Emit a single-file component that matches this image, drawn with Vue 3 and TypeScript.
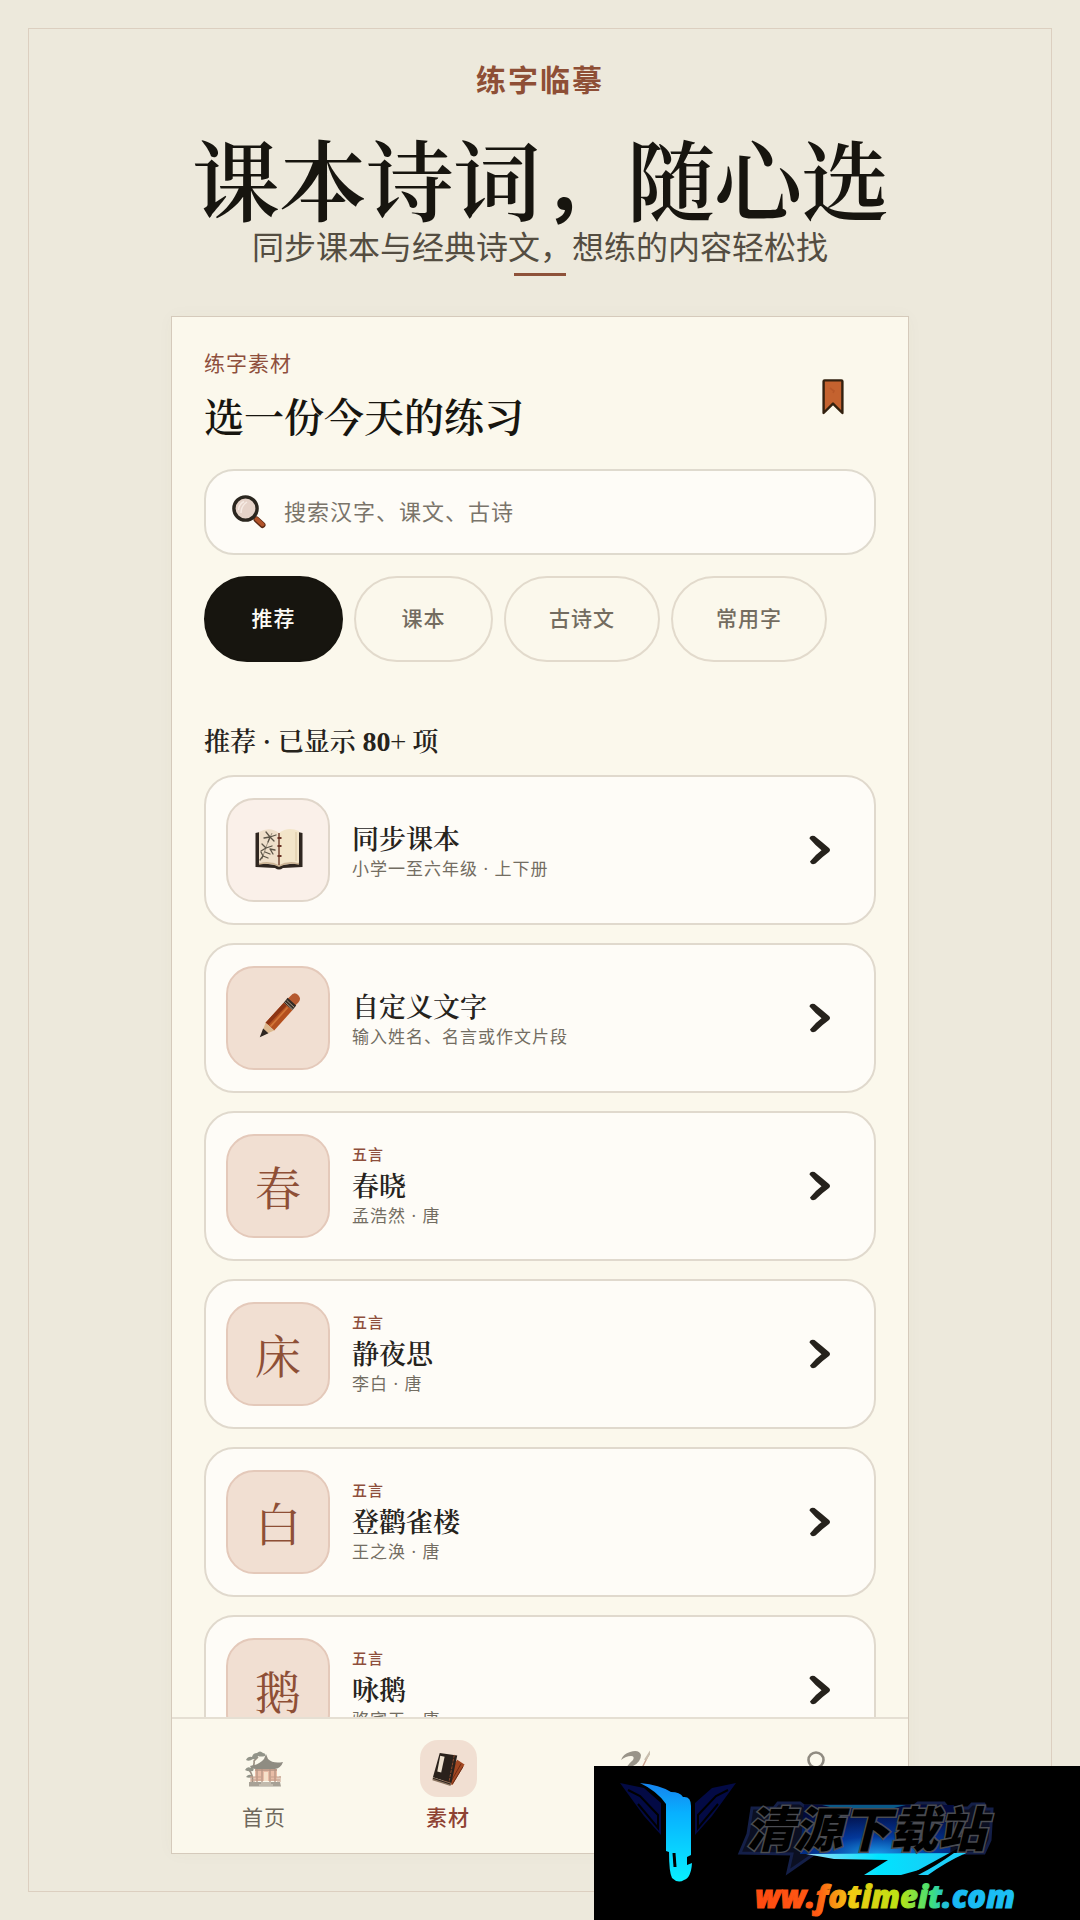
<script setup lang="ts">
import { ref } from 'vue'

interface Item {
  title: string
  sub: string
  tag?: string
  glyph?: string
  icon?: 'book' | 'pencil'
}

const query = ref('')
const chips: string[] = ['推荐', '课本', '古诗文', '常用字']
const activeChip = ref('推荐')

const items: Item[] = [
  { title: '同步课本', sub: '小学一至六年级 · 上下册', icon: 'book' },
  { title: '自定义文字', sub: '输入姓名、名言或作文片段', icon: 'pencil' },
  { tag: '五言', title: '春晓', sub: '孟浩然 · 唐', glyph: '春' },
  { tag: '五言', title: '静夜思', sub: '李白 · 唐', glyph: '床' },
  { tag: '五言', title: '登鹳雀楼', sub: '王之涣 · 唐', glyph: '白' },
  { tag: '五言', title: '咏鹅', sub: '骆宾王 · 唐', glyph: '鹅' },
]
</script>

<template>
  <div class="page">
    <main class="frame">
      <p class="brand">练字临摹</p>
      <h1 class="headline">课本诗词<span class="comma">，</span>随心选</h1>
      <p class="tagline">同步课本与经典诗文，想练的内容轻松找</p>
      <div class="rule"></div>

      <section class="phone">
        <div class="content">
          <header class="top">
            <div class="top-text">
              <p class="eyebrow">练字素材</p>
              <h2 class="heading">选一份今天的练习</h2>
            </div>
            <button class="bookmark" type="button">
              <svg width="22" height="36" viewBox="0 0 22 36">
                <path d="M1.6 2.2 Q1.6 1.4 2.6 1.4 L19.4 1.4 Q20.4 1.4 20.4 2.2 L20.4 34 L11 24.6 L1.6 34 Z" fill="#c4622f" stroke="#33210f" stroke-width="2.4" stroke-linejoin="round" />
                <path d="M8 9 L12 12 L11 14" fill="none" stroke="#b85829" stroke-width="1.6" />
              </svg>
            </button>
          </header>

          <label class="search">
            <svg width="34" height="34" viewBox="0 0 34 34">
              <path d="M24.5 24.5 L30.5 30" stroke="#5b2a15" stroke-width="6" stroke-linecap="round" />
              <path d="M24.5 24 L30.5 29.5" stroke="#b2532a" stroke-width="4" stroke-linecap="round" />
              <circle cx="13.5" cy="13.5" r="11.6" fill="#e6d3c9" stroke="#2b261f" stroke-width="3.4" />
              <path d="M6.5 15 Q7 9 12 6.5 M9 18 Q9 11 15 7" fill="none" stroke="#f6ebe4" stroke-width="1.5" />
            </svg>
            <input v-model="query" type="text" placeholder="搜索汉字、课文、古诗" />
          </label>

          <div class="chips">
            <button
              v-for="chip in chips"
              :key="chip"
              type="button"
              class="chip"
              :class="{ active: chip === activeChip }"
              @click="activeChip = chip"
            >{{ chip }}</button>
          </div>

          <h3 class="section">推荐 · 已显示 <b>80</b>+ 项</h3>

          <ul class="list">
            <li v-for="item in items" :key="item.title">
              <button type="button" class="card">
                <span class="thumb" :class="{ pale: item.icon === 'book' }">
                  <svg v-if="item.icon === 'book'" width="50" height="44" viewBox="-1 0 50 44">
                    <path d="M1.5 6 L6 5 L6 36 L22 38 L28 38 L44 36 L44 5 L48.5 6 L48.5 40 L29 41 Q25 44 21 41 L1.5 40 Z" fill="#2f2620" />
                    <path d="M5 5 Q16 -1 25 6 L25 38 Q16 33 5 36 Z" fill="#efdfca" />
                    <path d="M45 4 Q34 -1 25 6 L25 38 Q34 33 45 36 Z" fill="#f3e5c9" />
                    <path d="M5 37 Q16 34 25 39 Q34 34 45 37" fill="none" stroke="#cdb595" stroke-width="1.6" />
                    <path d="M42 5 L42 34" stroke="#dac6a3" stroke-width="1" />
                    <path d="M25 6 L25 38" stroke="#6d3a28" stroke-width="1.4" />
                    <path d="M23.5 11 L27.5 11 M23.5 19 L27.5 19 M23.5 29 L27.5 29" stroke="#6a3326" stroke-width="1.8" />
                    <path d="M18 6 Q13 16 8 32" fill="none" stroke="#877b69" stroke-width="0.8" />
                    <path d="M16 10 L10 11 M16 10 L12 5 M16 10 L22 8 M16 10 L20 14 M16 10 L14 15 M12 21 L8 17 M12 21 L18 19 M16 22 L21 23 M16 22 L19 27 M12 21 L7 24 M11 25 L16 27 M9 29 L14 31 M9 29 L6 33 M9 29 L7 25" stroke="#5c5447" stroke-width="1.3" stroke-linecap="round" />
                  </svg>
                  <svg v-else-if="item.icon === 'pencil'" width="46" height="50" viewBox="-3 1 48 52">
                    <path d="M34 5 Q38 0 42 4 Q46 8 42 12 L39 15 L31 8 Z" fill="#b5592f" />
                    <path d="M31 7 L40 15 L36 20 L27 12 Z" fill="#332b25" />
                    <path d="M30 9.5 L38 17 M28.5 11.5 L36.5 19" stroke="#b4a48e" stroke-width="1" />
                    <path d="M27 12 L36 20 L17 41 L8 33 Z" fill="#b4501f" />
                    <path d="M27 12 L30 15 L11 35 L8 33 Z" fill="#8c3514" />
                    <path d="M31 17 L13 37" stroke="#d27638" stroke-width="1.8" />
                    <path d="M8 33 L17 41 L3 47 Z" fill="#dcb990" />
                    <path d="M5.5 39 L11 44 L2 48 Z" fill="#2e2722" />
                  </svg>
                  <template v-else>{{ item.glyph }}</template>
                </span>
                <span class="texts">
                  <span v-if="item.tag" class="tag">{{ item.tag }}</span>
                  <span class="title">{{ item.title }}</span>
                  <span class="sub">{{ item.sub }}</span>
                </span>
                <svg class="chevron" width="22" height="30" viewBox="0 0 22 30">
                  <path d="M0.5 3.5 Q1 0 5.500 1 Q13 7 20 13 Q22 15 20 17 Q13 22 6.500 28.500 Q2 30.500 1 26.500 Q6 20 12.500 15.200 Q6 10 0.500 3.500 Z" fill="#26221c" />
                </svg>
              </button>
            </li>
          </ul>
        </div>

        <nav class="tabs">
          <a href="#home" class="tab">
            <span class="tab-icon">
              <svg class="faded" width="40" height="38" viewBox="0 0 40 38">
                <path d="M8 34 Q10 26 5 20 Q11 17 10 11 Q12 9 14 7" fill="none" stroke="#4c3a2c" stroke-width="1.6" />
                <path d="M2 10 Q4 6 8 7 Q9 3 13 3 Q16 0 19 3 Q22 3 21 6 Q17 7 14 6 Q13 10 9 9 Q5 12 2 10 Z M1 20 Q3 16 7 18 Q11 18 9 21 Q4 22 1 20 Z M2 27 Q5 23 9 26 Q6 29 2 27 Z" fill="#3d4439" />
                <path d="M22 4 L24 9 Q29 14 39 12 Q37 18 31 19 L12 19 Q7 19 6 16 Q15 15 20 9 Z" fill="#38342d" />
                <path d="M11 19 L33 19 L33 31 L11 31 Z" fill="#d98e70" />
                <path d="M13 19 L13 32 M18 19 L18 32 M26 19 L26 32 M31 19 L31 32 M11 20 L33 20" stroke="#7e4630" stroke-width="1.3" />
                <path d="M20 22 L24 22 L24 31 L20 31 Z" fill="#f3cfb0" />
                <path d="M6 27 L17 27 M27 27 L37 27 M7 30 L17 30 M27 30 L36 30 M7 26 L7 32 M10 27 L10 32 M34 27 L34 32 M36 26 L36 32" stroke="#99563d" stroke-width="1" />
                <path d="M5 32 L36 32 L37 36.5 L5 36.5 Z" fill="#635b50" />
                <path d="M17 33 L27 33 M15 35 L29 35" stroke="#c4b8a4" stroke-width="1" />
              </svg>
            </span>
            <span>首页</span>
          </a>
          <a href="#library" class="tab current">
            <span class="tab-icon">
              <svg width="36" height="36" viewBox="-1 -1 37 37">
                <path d="M27 8 L34.5 13 L22 34 L12 30 Z" fill="#a34822" />
                <path d="M31 12 L19 33 M33 15 L22 33" stroke="#6a2914" stroke-width="1" />
                <path d="M9 1 L27 3.5 L21 32 L2 26 Z" fill="#2a211b" />
                <path d="M2 26 L21 32 L20 35 L1.5 29 Z" fill="#8b7460" />
                <path d="M2 27 L20 33" stroke="#2a211b" stroke-width="1" />
                <path d="M24 3 L18.5 31" stroke="#8f4a2b" stroke-width="1" stroke-dasharray="3 1" />
                <path d="M9.5 4 L14 5 L10.5 21 L6.5 20 Z" fill="#efe2d0" />
              </svg>
            </span>
            <span>素材</span>
          </a>
          <a href="#practice" class="tab">
            <span class="tab-icon">
              <svg class="faded" width="36" height="42" viewBox="0 0 36 42">
                <path d="M7 12 Q9 6 16 4 Q25 1 27 7 Q27 14 19 18 L8 27 Q12 18 19 12 Q21 8 17 8 Q12 8 7 12 Z" fill="#4a4339" />
                <path d="M36 4 L26 24" stroke="#a2543b" stroke-width="1.4" />
                <path d="M37 3 L31 12" stroke="#a0917e" stroke-width="2.2" />
              </svg>
            </span>
          </a>
          <a href="#me" class="tab">
            <span class="tab-icon">
              <svg class="faded" width="36" height="36" viewBox="0 0 36 36">
                <circle cx="18" cy="9" r="7.5" fill="none" stroke="#39332b" stroke-width="2.6" />
                <path d="M4 34 Q5 20 18 20 Q31 20 32 34 Z" fill="none" stroke="#39332b" stroke-width="2.6" />
              </svg>
            </span>
          </a>
        </nav>
      </section>
    </main>

    <aside class="site-mark">
      <svg width="486" height="154" viewBox="0 0 486 154">
        <defs>
          <linearGradient id="pillar" x1="0" y1="0" x2="0" y2="1">
            <stop offset="0" stop-color="#1582ee" />
            <stop offset="0.3" stop-color="#08b0ff" />
            <stop offset="1" stop-color="#08f0ff" />
          </linearGradient>
          <radialGradient id="glow" cx="0.5" cy="1" r="0.9">
            <stop offset="0" stop-color="#1b9be8" />
            <stop offset="0.4" stop-color="#03389a" />
            <stop offset="1" stop-color="#020a3c" />
          </radialGradient>
          <linearGradient id="swoosh" x1="0" y1="0" x2="1" y2="0">
            <stop offset="0" stop-color="#9adcf8" />
            <stop offset="0.45" stop-color="#00e4ff" />
            <stop offset="1" stop-color="#23c2f2" />
          </linearGradient>
          <linearGradient id="rainbow" x1="0" y1="0" x2="1" y2="0">
            <stop offset="0" stop-color="#ff4a10" />
            <stop offset="0.24" stop-color="#ff5a14" />
            <stop offset="0.37" stop-color="#f2ca12" />
            <stop offset="0.56" stop-color="#b8e414" />
            <stop offset="0.68" stop-color="#3fe07c" />
            <stop offset="0.75" stop-color="#18b8f4" />
            <stop offset="1" stop-color="#1cc0f4" />
          </linearGradient>
        </defs>

        <path d="M26 17 L50 22 L67 37 L67 69 L50 50 Z M142 17 L118 22 L101 37 L101 69 L118 50 Z" fill="#030a45" />
        <path d="M34 24 L46 30 L64 49 L64 62 L44 38 M134 24 L122 30 L104 49 L104 62 L124 38" fill="none" stroke="#000" stroke-width="2" />
        <path d="M46 17 Q66 19 77 26 Q86 26 89 31 Q97 30 97 40 L97 89 L93 91 L93 99 L98 97 Q97 112 90 114 Q84 118 78 112 Q75 106 75 86 L72 85 L72 38 Q63 25 46 17 Z" fill="url(#pillar)" />
        <path d="M80 87 L81 101" stroke="#000" stroke-width="3" />

        <path d="M158 42 L180 42 L184 37 L206 37 L210 40 L320 40 L324 37 L350 37 L354 42 L374 42 L378 38 L390 38 L392 43 L398 43 L396 74 L390 87 L220 88 L194 106 L198 88 L146 87 L154 68 Z" fill="#0b0f22" stroke="#141f48" stroke-width="3" />
        <path d="M210 39 L360 39 L356 88 L206 88 Z" fill="url(#glow)" />
        <path d="M228 39 L312 39 L300 42 L240 42 Z" fill="#0a5a88" />
        <path d="M212 88 L372 87 L350 97 L307 109 L270 109 L294 94 L240 93 Z" fill="url(#swoosh)" />
        <path d="M368 87 Q346 99 326 110" fill="none" stroke="#000" stroke-width="12" />
        <path d="M372 87 L360 87 Q342 100 324 109 L334 109 Q352 96 372 87 Z" fill="#1cd0fa" />
        <text class="mark-name" x="152" y="81">清源下载站</text>
        <text class="mark-url" x="161" y="142">ww.fotimeit.com</text>
      </svg>
    </aside>
  </div>
</template>

<style>
body {
  background: #ede9dc;
}
</style>

<style scoped>
* {
  box-sizing: border-box;
  margin: 0;
  padding: 0;
}

.page {
  height: 100vh;
  padding: 28px;
  background: #ede9dc;
  font-family: "Noto Sans CJK SC", "Noto Sans", sans-serif;
  color: #17150f;
}

button,
input {
  font: inherit;
  color: inherit;
}

.frame {
  height: 100%;
  display: flex;
  flex-direction: column;
  align-items: center;
  padding: 28px 0 37px;
  border: 1px solid #dccfc0;
}

.brand {
  font-size: 30px;
  line-height: 42px;
  font-weight: 700;
  letter-spacing: 2px;
  color: #8e4f36;
}

.headline {
  margin-top: 26px;
  font-family: "Noto Serif CJK SC", "Noto Serif SC", "Noto Sans CJK SC", serif;
  font-size: 88px;
  line-height: 102px;
  font-weight: 600;
  letter-spacing: -1px;
  white-space: nowrap;
}

.comma {
  padding: 0 12px 0 4px;
  font-family: "Noto Sans CJK SC", sans-serif;
  font-size: 72px;
  font-weight: 700;
  line-height: 1;
}

.tagline {
  font-size: 32px;
  line-height: 36px;
  color: #544d41;
}

.rule {
  flex: none;
  width: 52px;
  height: 3px;
  margin: 10px 0 40px;
  background: #8e523a;
}

.phone {
  flex: 1;
  min-height: 0;
  width: 100%;
  max-width: 738px;
  display: flex;
  flex-direction: column;
  border: 1px solid #d5cabb;
  background: #fbf8ec;
  box-shadow: 0 0 16px rgba(90, 80, 50, 0.03);
}

.content {
  flex: 1;
  min-height: 0;
  padding: 31px 32px 0;
  overflow: hidden;
}

.top {
  display: flex;
  justify-content: space-between;
  align-items: center;
}

.top-text {
  padding-bottom: 4px;
}

.eyebrow {
  font-size: 21px;
  line-height: 28px;
  letter-spacing: 1px;
  color: #8e4f3c;
}

.heading {
  margin-top: 12px;
  font-family: "Noto Serif CJK SC", "Noto Serif SC", "Noto Sans CJK SC", serif;
  font-size: 40px;
  line-height: 54px;
  font-weight: 600;
}

.bookmark {
  width: 86px;
  height: 86px;
  display: grid;
  place-items: center;
  border: 0;
  background: none;
}

.search {
  display: flex;
  align-items: center;
  gap: 18px;
  height: 86px;
  margin-top: 23px;
  padding: 0 26px;
  border: 2px solid #dfdace;
  border-radius: 30px;
  background: #fefcf7;
}

.search input {
  flex: 1;
  min-width: 0;
  padding-bottom: 4px;
  border: 0;
  outline: 0;
  background: none;
  font-size: 22px;
  line-height: 32px;
  letter-spacing: 1px;
}

.search input::placeholder {
  color: #7a746a;
  opacity: 1;
}

.chips {
  display: flex;
  gap: 11px;
  margin-top: 21px;
}

.chip {
  min-width: 139px;
  height: 86px;
  padding: 0 43px 4px;
  border: 2px solid #e2dacc;
  border-radius: 43px;
  background: #fbf8ec;
  font-size: 21px;
  font-weight: 500;
  letter-spacing: 1px;
  color: #736c60;
}

.chip.active {
  border-color: #17150f;
  background: #17150f;
  color: #fefcf7;
}

.section {
  margin-top: 60px;
  font-family: "Noto Serif CJK SC", "Noto Serif SC", "Noto Sans CJK SC", serif;
  font-size: 26px;
  line-height: 36px;
  font-weight: 600;
  color: #26231c;
}

.section b {
  font-family: "Liberation Serif", serif;
  font-size: 28px;
  line-height: 1;
  font-weight: 700;
}

.list {
  display: flex;
  flex-direction: column;
  gap: 18px;
  margin-top: 17px;
  list-style: none;
}

.card {
  width: 100%;
  height: 150px;
  display: flex;
  align-items: center;
  gap: 22px;
  padding: 0 43px 0 20px;
  border: 2px solid #e0d9cd;
  border-radius: 30px;
  background: #fefcf7;
  text-align: left;
}

.thumb {
  flex: none;
  width: 104px;
  height: 104px;
  display: grid;
  place-items: center;
  padding-bottom: 3px;
  border: 2px solid #e4c9ba;
  border-radius: 28px;
  background: #f1dfd2;
  font-family: "Noto Serif CJK SC", "Noto Serif SC", "Noto Sans CJK SC", serif;
  font-size: 46px;
  color: #8e4f36;
}

.thumb.pale {
  border-color: #e0d6ca;
  background: #faf0e9;
}

.texts {
  flex: 1;
  display: flex;
  flex-direction: column;
  padding-bottom: 2px;
}

.tag {
  font-size: 15px;
  line-height: 22px;
  font-weight: 500;
  letter-spacing: 1px;
  color: #8e4f3c;
}

.title {
  font-family: "Noto Serif CJK SC", "Noto Serif SC", "Noto Sans CJK SC", serif;
  font-size: 27px;
  line-height: 40px;
  font-weight: 600;
  color: #26231c;
}

.sub {
  font-family: "Noto Sans", "Noto Sans CJK SC", sans-serif;
  font-size: 17px;
  line-height: 22px;
  letter-spacing: 1px;
  color: #736d62;
}

.chevron {
  flex: none;
}

.tabs {
  flex: none;
  display: grid;
  grid-template-columns: repeat(4, 1fr);
  padding: 21px 0 22px;
  border-top: 2px solid #e5dfd3;
}

.tab {
  display: flex;
  flex-direction: column;
  align-items: center;
  gap: 4px;
  font-size: 21px;
  line-height: 30px;
  letter-spacing: 1px;
  text-decoration: none;
  color: #6f685c;
}

.tab-icon {
  width: 57px;
  height: 57px;
  display: grid;
  place-items: center;
  border-radius: 18px;
}

.current {
  font-weight: 500;
  color: #8e4233;
}

.current .tab-icon {
  background: #f1dfd2;
}

.faded {
  opacity: 0.55;
}

.site-mark {
  position: fixed;
  right: 0;
  bottom: 0;
  width: 486px;
  height: 154px;
  background: #000;
}

.mark-name {
  font-size: 48px;
  font-weight: 900;
  font-style: italic;
  fill: #000;
  stroke: #4a4c52;
  stroke-width: 3px;
  paint-order: stroke;
}

.mark-url {
  font-family: "Open Sans", "Noto Sans", sans-serif;
  font-size: 31px;
  font-weight: 800;
  font-style: italic;
  fill: url(#rainbow);
  stroke: url(#rainbow);
  stroke-width: 1px;
}
</style>
